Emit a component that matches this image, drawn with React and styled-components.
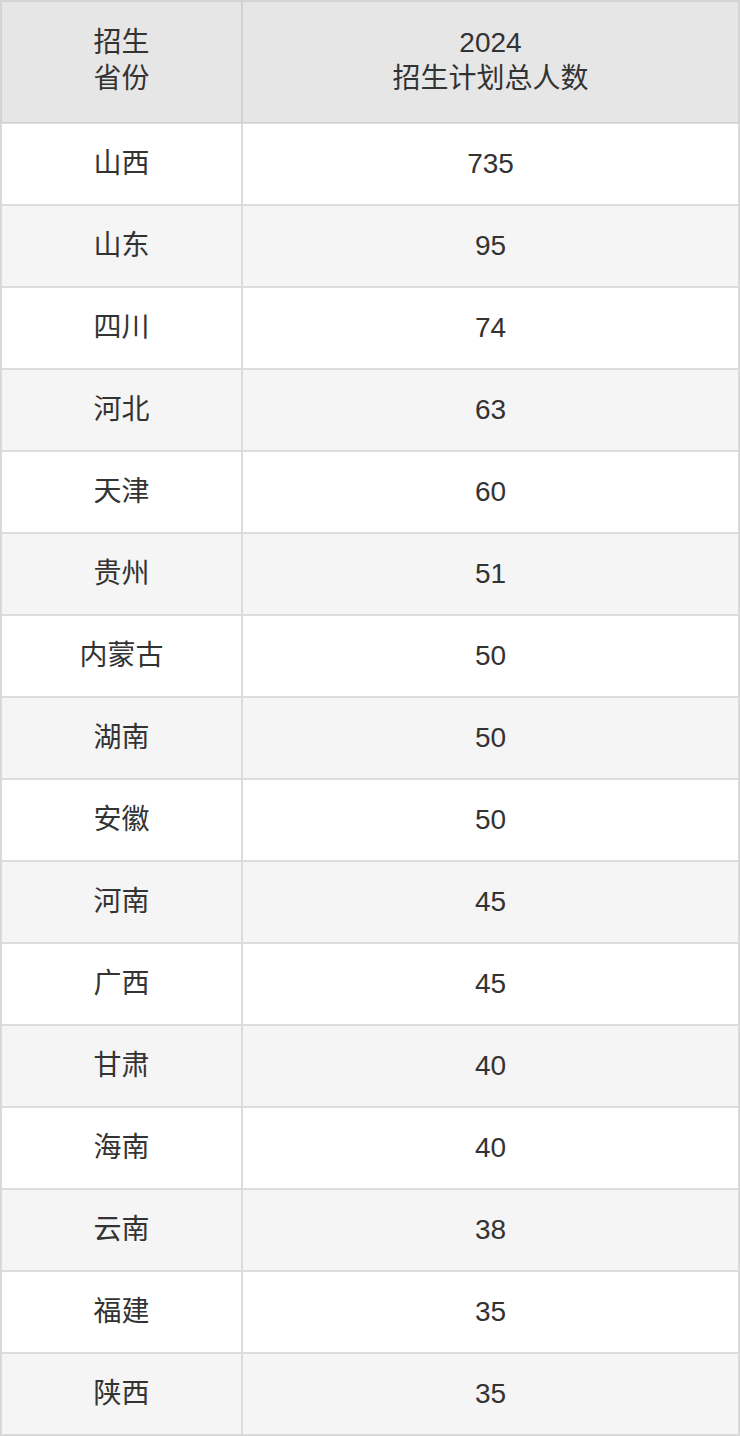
import React from 'react';
import styled, { createGlobalStyle } from 'styled-components';

const GlobalStyle = createGlobalStyle`
  body {
    margin: 0;
    background: #fff;
    font-family: "Liberation Sans", Arial, "Noto Sans CJK SC", sans-serif;
    color: #333;
  }
`;

const Table = styled.table`
  width: 740px;
  border-collapse: separate;
  border-spacing: 0;
  border: 1px solid #d6d6d6;
  table-layout: fixed;
`;

const HeadCell = styled.th`
  width: ${(p) => p.width || 'auto'};
  height: 122px;
  padding: 0 0 2px;
  box-sizing: border-box;
  border: 1px solid #d2d2d2;
  background: #e6e6e6;
  font-weight: normal;
  font-size: 28px;
  line-height: 36px;
  text-align: center;
  vertical-align: middle;
  color: #333;
`;

const Row = styled.tr`
  background: ${(p) => (p.striped ? '#f5f5f5' : '#fff')};
`;

const Cell = styled.td`
  height: 82px;
  padding: 0;
  box-sizing: border-box;
  border: 1px solid #dcdcdc;
  font-size: 28px;
  line-height: 36px;
  text-align: center;
  vertical-align: middle;
  color: #333;
`;

const rows = [
  ['山西', 735],
  ['山东', 95],
  ['四川', 74],
  ['河北', 63],
  ['天津', 60],
  ['贵州', 51],
  ['内蒙古', 50],
  ['湖南', 50],
  ['安徽', 50],
  ['河南', 45],
  ['广西', 45],
  ['甘肃', 40],
  ['海南', 40],
  ['云南', 38],
  ['福建', 35],
  ['陕西', 35],
];

const App = () => (
  <>
    <GlobalStyle />
    <Table>
      <thead>
        <tr>
          <HeadCell width="241px">
            招生
            <br />
            省份
          </HeadCell>
          <HeadCell>
            2024
            <br />
            招生计划总人数
          </HeadCell>
        </tr>
      </thead>
      <tbody>
        {rows.map(([province, count], index) => (
          <Row key={province} striped={index % 2 === 1}>
            <Cell>{province}</Cell>
            <Cell>{count}</Cell>
          </Row>
        ))}
      </tbody>
    </Table>
  </>
);

export default App;
